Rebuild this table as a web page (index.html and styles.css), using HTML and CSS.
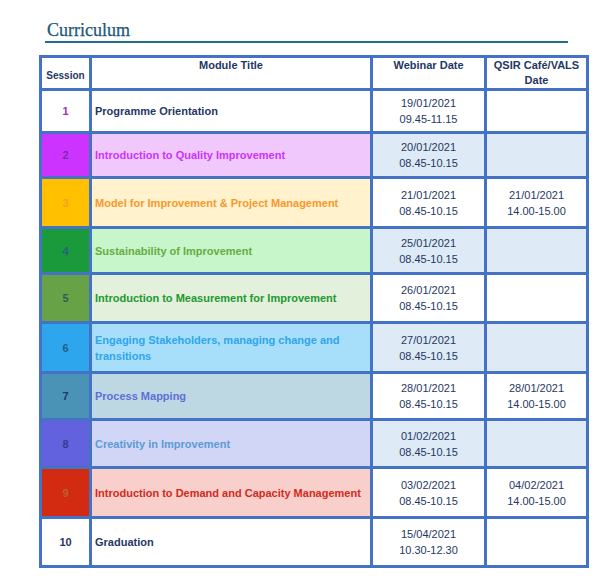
FILE: index.html
```html
<!DOCTYPE html>
<html>
<head>
<meta charset="utf-8">
<link rel="stylesheet" href="styles.css">
</head>
<body>
<div class="page">
  <h2 class="title">Curriculum</h2>
  <table class="curr">
    <colgroup>
      <col class="c-session"><col class="c-module"><col class="c-web"><col class="c-qsir">
    </colgroup>
    <thead>
      <tr class="hdr">
        <th class="mid">Session</th>
        <th>Module Title</th>
        <th>Webinar Date</th>
        <th>QSIR Café/VALS<br>Date</th>
      </tr>
    </thead>
    <tbody>
      <tr class="r1"><td class="num">1</td><td class="mod">Programme Orientation</td><td class="date">19/01/2021<br>09.45-11.15</td><td class="date"></td></tr>
      <tr class="r2 alt"><td class="num">2</td><td class="mod">Introduction to Quality Improvement</td><td class="date">20/01/2021<br>08.45-10.15</td><td class="date"></td></tr>
      <tr class="r3"><td class="num">3</td><td class="mod">Model for Improvement &amp; Project Management</td><td class="date">21/01/2021<br>08.45-10.15</td><td class="date">21/01/2021<br>14.00-15.00</td></tr>
      <tr class="r4 alt"><td class="num">4</td><td class="mod">Sustainability of Improvement</td><td class="date">25/01/2021<br>08.45-10.15</td><td class="date"></td></tr>
      <tr class="r5"><td class="num">5</td><td class="mod">Introduction to Measurement for Improvement</td><td class="date">26/01/2021<br>08.45-10.15</td><td class="date"></td></tr>
      <tr class="r6 alt"><td class="num">6</td><td class="mod">Engaging Stakeholders, managing change and transitions</td><td class="date">27/01/2021<br>08.45-10.15</td><td class="date"></td></tr>
      <tr class="r7"><td class="num">7</td><td class="mod">Process Mapping</td><td class="date">28/01/2021<br>08.45-10.15</td><td class="date">28/01/2021<br>14.00-15.00</td></tr>
      <tr class="r8 alt"><td class="num">8</td><td class="mod">Creativity in Improvement</td><td class="date">01/02/2021<br>08.45-10.15</td><td class="date"></td></tr>
      <tr class="r9"><td class="num">9</td><td class="mod">Introduction to Demand and Capacity Management</td><td class="date">03/02/2021<br>08.45-10.15</td><td class="date">04/02/2021<br>14.00-15.00</td></tr>
      <tr class="r10"><td class="num">10</td><td class="mod">Graduation</td><td class="date">15/04/2021<br>10.30-12.30</td><td class="date"></td></tr>
    </tbody>
  </table>
</div>
</body>
</html>
```

FILE: styles.css
```css
html, body {
  margin: 0;
  padding: 0;
  background: #ffffff;
}

.page {
  padding: 19px 0 0 0;
  font-family: "Liberation Sans", Arial, sans-serif;
}

.title {
  margin: 0 0 0 45px;
  width: 523px;
  font-family: "Liberation Serif", "DejaVu Serif", serif;
  font-weight: normal;
  font-size: 18px;
  line-height: 22px;
  color: #1b5878;
  padding-left: 2px;
  box-sizing: border-box;
  border-bottom: 2px solid #1f6e8c;
  -webkit-text-stroke: 0.25px #1b5878;
}

.curr {
  margin: 12px 0 0 39px;
  border-collapse: collapse;
  table-layout: fixed;
  width: 550px;
  border: 3px solid #4472c4;
}

.c-session { width: 50px; }
.c-module { width: 281px; }
.c-web { width: 114px; }
.c-qsir { width: 102px; }

.curr th,
.curr td {
  border: 3px solid #4472c4;
  padding: 0 3px;
  font-size: 11px;
  line-height: 16px;
  font-weight: bold;
  color: #1f3864;
}

.curr th {
  vertical-align: top;
  text-align: center;
  padding-top: 0;
  line-height: 15px;
  height: 25px;
}

.hdr { height: 28px; }

.curr th.mid {
  vertical-align: middle;
  padding-top: 4px;
  font-size: 10px;
}

.curr td {
  vertical-align: middle;
}

.num { text-align: center; }
.mod { text-align: left; }
.date {
  text-align: center;
  font-weight: normal !important;
}

.alt .date { background: #deeaf6; }

.r1 { height: 43px; }
.r2 { height: 45px; }
.r3 { height: 50px; }
.r4 { height: 46px; }
.r5 { height: 49px; }
.r6 { height: 50px; }
.r7 { height: 47px; }
.r8 { height: 48px; }
.r9 { height: 50px; }
.r10 { height: 49px; }

.r1 .num { color: #9b2ec8; }

.r2 .num { background: #cc33ff; color: #7a2aa8; }
.r2 .mod { background: #f0c8fc; color: #cc33ff; }

.r3 .num { background: #ffc000; color: #f5a020; }
.r3 .mod { background: #fff2cc; color: #f7982e; }

.r4 .num { background: #1a9a3a; color: #2b5f86; }
.r4 .mod { background: #c6f6c9; color: #6aab45; }

.r5 .num { background: #67a247; color: #2f5f5a; }
.r5 .mod { background: #e3f0db; color: #22992f; }

.r6 .num { background: #2ea6ee; color: #245f86; }
.r6 .mod { background: #a7def9; color: #2ea6ee; }

.r7 .num { background: #4a93b7; color: #1f3864; }
.r7 .mod { background: #bdd8e3; color: #5f6fd6; }

.r8 .num { background: #6262df; color: #3a3a8a; }
.r8 .mod { background: #d1d5f6; color: #5b9bd5; }

.r9 .num { background: #d32a12; color: #c06030; }
.r9 .mod { background: #f9cfcc; color: #d42a1a; }
```
